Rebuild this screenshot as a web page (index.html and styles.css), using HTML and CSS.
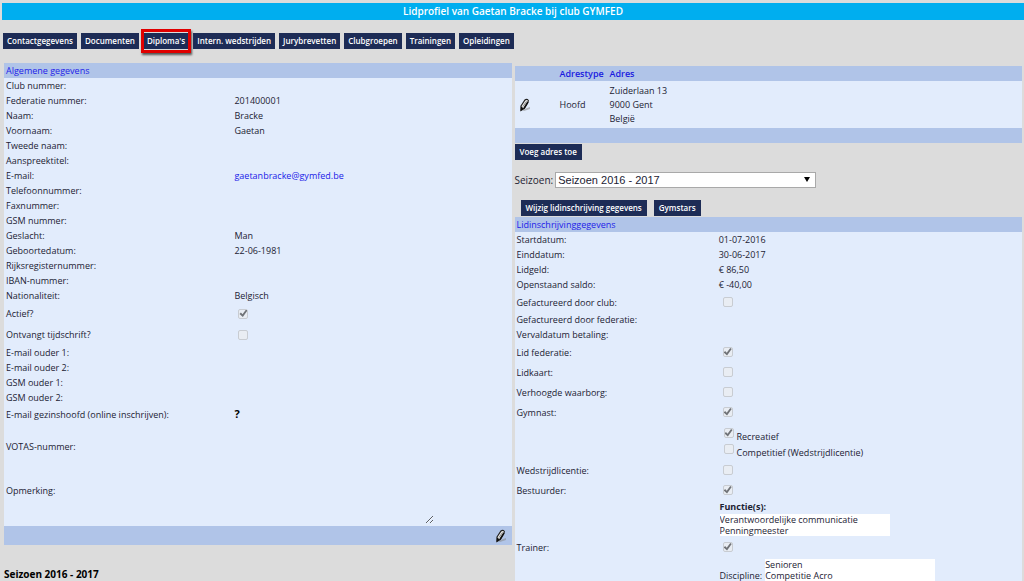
FILE: index.html
```html
<!DOCTYPE html>
<html lang="nl">
<head>
<meta charset="utf-8">
<title>Lidprofiel van Gaetan Bracke</title>
<link rel="stylesheet" href="styles.css">
</head>
<body>
<svg class="defs" width="0" height="0" aria-hidden="true">
  <symbol id="pencil" viewBox="0 0 12 14">
    <path d="M3 12 L11 9 L11 11 L5 13Z" fill="#888" opacity=".55"/>
    <path d="M2 8 L6 2 Q7 1 8.500 1.500 Q10 2.500 9 4 L5 10.500 L2 12.500Z" fill="#e8e8e8" stroke="#222" stroke-width="1.200"/>
    <path d="M2 8.500 L5 10.500 L1.500 13Z" fill="#111"/>
    <path d="M4 8.500 L7.500 3.500" stroke="#888" stroke-width="1"/>
    <path d="M5 10.500 L9 4" stroke="#111" stroke-width="1.500"/>
  </symbol>
</svg>
<h1 class="title">Lidprofiel van Gaetan Bracke bij club GYMFED</h1>
<nav class="tabs">
  <button class="btn">Contactgegevens</button>
  <button class="btn">Documenten</button>
  <button class="btn marked">Diploma's</button>
  <button class="btn">Intern. wedstrijden</button>
  <button class="btn">Jurybrevetten</button>
  <button class="btn">Clubgroepen</button>
  <button class="btn">Trainingen</button>
  <button class="btn">Opleidingen</button>
</nav>
<main class="columns">
  <section class="left">
    <div class="panel">
      <h2 class="bar">Algemene gegevens</h2>
      <div class="row"><span>Club nummer:</span></div>
      <div class="row"><span>Federatie nummer:</span><span>201400001</span></div>
      <div class="row"><span>Naam:</span><span>Bracke</span></div>
      <div class="row"><span>Voornaam:</span><span>Gaetan</span></div>
      <div class="row"><span>Tweede naam:</span></div>
      <div class="row"><span>Aanspreektitel:</span></div>
      <div class="row"><span>E-mail:</span><a href="mailto:gaetanbracke@gymfed.be">gaetanbracke@gymfed.be</a></div>
      <div class="row"><span>Telefoonnummer:</span></div>
      <div class="row"><span>Faxnummer:</span></div>
      <div class="row"><span>GSM nummer:</span></div>
      <div class="row"><span>Geslacht:</span><span>Man</span></div>
      <div class="row"><span>Geboortedatum:</span><span>22-06-1981</span></div>
      <div class="row"><span>Rijksregisternummer:</span></div>
      <div class="row"><span>IBAN-nummer:</span></div>
      <div class="row"><span>Nationaliteit:</span><span>Belgisch</span></div>
      <div class="row tall"><label for="actief">Actief?</label><input type="checkbox" id="actief" checked disabled></div>
      <div class="row tall"><label for="tijdschrift">Ontvangt tijdschrift?</label><input type="checkbox" id="tijdschrift" disabled></div>
      <div class="row"><span>E-mail ouder 1:</span></div>
      <div class="row"><span>E-mail ouder 2:</span></div>
      <div class="row"><span>GSM ouder 1:</span></div>
      <div class="row"><span>GSM ouder 2:</span></div>
      <div class="row household"><span>E-mail gezinshoofd (online inschrijven):</span><b class="help">?</b></div>
      <div class="row"><span>VOTAS-nummer:</span></div>
      <div class="row remark"><label for="opmerking">Opmerking:</label><textarea id="opmerking" readonly></textarea></div>
      <div class="foot"><button class="icon" aria-label="Bewerken"><svg><use href="#pencil"/></svg></button></div>
    </div>
    <h2 class="season-title">Seizoen 2016 - 2017</h2>
  </section>
  <section class="right">
    <table class="addresses">
      <thead><tr><th class="edit"></th><th class="type">Adrestype</th><th>Adres</th></tr></thead>
      <tbody><tr><td><button class="icon" aria-label="Adres bewerken"><svg><use href="#pencil"/></svg></button></td><td>Hoofd</td><td>Zuiderlaan 13<br>9000 Gent<br>België</td></tr></tbody>
      <tfoot><tr><td colspan="3"></td></tr></tfoot>
    </table>
    <button class="btn add">Voeg adres toe</button>
    <div class="season">
      <label for="seizoen">Seizoen:</label>
      <div class="picker"><select id="seizoen"><option>Seizoen 2016 - 2017</option></select></div>
    </div>
    <div class="actions">
      <button class="btn">Wijzig lidinschrijving gegevens</button>
      <button class="btn">Gymstars</button>
    </div>
    <div class="panel">
      <h2 class="bar">Lidinschrijvinggegevens</h2>
      <div class="row"><span>Startdatum:</span><span>01-07-2016</span></div>
      <div class="row"><span>Einddatum:</span><span>30-06-2017</span></div>
      <div class="row"><span>Lidgeld:</span><span>€ 86,50</span></div>
      <div class="row"><span>Openstaand saldo:</span><span>€ -40,00</span></div>
      <div class="row tall"><label for="club">Gefactureerd door club:</label><input type="checkbox" id="club" disabled></div>
      <div class="row"><span>Gefactureerd door federatie:</span></div>
      <div class="row"><span>Vervaldatum betaling:</span></div>
      <div class="row tall"><label for="lid">Lid federatie:</label><input type="checkbox" id="lid" checked disabled></div>
      <div class="row tall"><label for="kaart">Lidkaart:</label><input type="checkbox" id="kaart" disabled></div>
      <div class="row tall"><label for="waarborg">Verhoogde waarborg:</label><input type="checkbox" id="waarborg" disabled></div>
      <div class="row tall"><label for="gymnast">Gymnast:</label><input type="checkbox" id="gymnast" checked disabled></div>
      <div class="sub kinds">
        <div class="kind"><input type="checkbox" id="recreatief" checked disabled><label for="recreatief">Recreatief</label></div>
        <div class="kind"><input type="checkbox" id="competitief" disabled><label for="competitief">Competitief (Wedstrijdlicentie)</label></div>
      </div>
      <div class="row tall"><label for="licentie">Wedstrijdlicentie:</label><input type="checkbox" id="licentie" disabled></div>
      <div class="row tall"><label for="bestuurder">Bestuurder:</label><input type="checkbox" id="bestuurder" checked disabled></div>
      <div class="sub roles">
        <label for="functies"><b>Functie(s):</b></label>
        <select id="functies" class="list" multiple size="2"><option>Verantwoordelijke communicatie</option><option>Penningmeester</option></select>
      </div>
      <div class="row tall"><label for="trainer">Trainer:</label><input type="checkbox" id="trainer" checked disabled></div>
      <div class="sub discipline">
        <label for="discipline">Discipline:</label>
        <select id="discipline" class="list" multiple size="2"><option>Senioren</option><option>Competitie Acro</option></select>
      </div>
    </div>
  </section>
</main>
</body>
</html>
```
FILE: styles.css
```css
* { box-sizing: border-box; }
body {
  margin: 0;
  padding: 3px 0 0 2px;
  background: #dcdcdc;
  color: #1c2233;
  font: 9px/15px "Open Sans", "Trebuchet MS", sans-serif;
}
.defs { position: absolute; }
h1, h2 { margin: 0; font-size: inherit; }
button, select, textarea { font: inherit; color: inherit; }
a { color: #1a1ae8; text-decoration: none; }

.title {
  background: #00aeef;
  color: #fff;
  font-size: 10px;
  font-weight: 600;
  line-height: 17px;
  text-align: center;
}
.tabs { display: flex; gap: 4px; padding: 13px 0 0 1px; }
.btn {
  border: 0;
  padding: 0 5px;
  background: #1d2c56;
  color: #fff;
  font-size: 8px;
  font-weight: 600;
  line-height: 16px;
  white-space: nowrap;
}
.tabs .btn { padding: 0 4px; }
.marked { position: relative; }
.marked::after {
  content: "";
  position: absolute;
  inset: -4px -2px;
  border: 3px solid #e00000;
  box-shadow: 1px 2px 2px #555;
}

.columns {
  display: grid;
  grid-template-columns: 1fr 1fr;
  gap: 3px;
  padding: 14px 2px 0;
}
.panel { background: #e2ecfc; }
.bar {
  padding: 0 2px;
  background: #b0c4e8;
  color: #2222e8;
  font-weight: normal;
}
.row {
  display: grid;
  grid-template-columns: 45% 1fr;
  column-gap: 1px;
  align-items: center;
  min-height: 15px;
  padding-left: 2px;
}
.right .row { grid-template-columns: 40% 1fr; column-gap: 0; }
.tall { min-height: 20px; }
.left .tall { min-height: 21px; }
.household { padding-bottom: 16px; }
.help { color: #000; font-size: 11px; line-height: 18px; }
.remark { min-height: 72px; }
textarea {
  align-self: end;
  width: 200px;
  height: 66px;
  margin-bottom: 2px;
  border: 0;
  background: transparent;
  resize: both;
}
.foot {
  display: flex;
  justify-content: flex-end;
  align-items: center;
  height: 19px;
  padding-right: 5px;
  background: #b0c4e8;
}
.icon { display: block; padding: 0; border: 0; background: none; }
.icon svg { display: block; width: 12px; height: 14px; }
.season-title { padding-top: 22px; color: #000; font-size: 10px; }

input[type="checkbox"] {
  appearance: none;
  display: grid;
  place-items: center;
  width: 10px;
  height: 10px;
  margin: 0 0 0 4px;
  border: 1px solid #c8ccd2;
  border-radius: 2px;
  background: #e9edf3;
}
input:checked::before {
  content: "";
  width: 8px;
  height: 8px;
  background: #707378;
  clip-path: polygon(0 55%, 18% 38%, 38% 58%, 82% 0, 100% 14%, 42% 95%);
}

.right { padding-top: 3px; }
.addresses { width: 100%; border-collapse: collapse; background: #e2ecfc; }
.addresses th { padding: 0; background: #b0c4e8; color: #1a1ae0; font-weight: 600; text-align: left; }
.addresses td { padding: 3px 0 2px; line-height: 14px; }
.addresses td:first-child { padding-left: 4px; }
.addresses .edit { width: 45px; }
.addresses .type { width: 50px; }
.addresses tfoot td { height: 15px; padding: 0; background: #b0c4e8; }
.add { display: block; margin-top: 1px; }
.season { display: flex; align-items: center; gap: 2px; padding-top: 12px; font-size: 10px; }
.picker { position: relative; }
.picker::after {
  content: "";
  position: absolute;
  right: 6px;
  top: 5px;
  border: 3px solid transparent;
  border-top: 5px solid #000;
  border-bottom: 0;
}
.picker select {
  appearance: none;
  display: block;
  width: 261px;
  height: 16px;
  padding: 0 2px;
  border: 1px solid #a9a9a9;
  border-radius: 0;
  background: #fff;
  font: 11px/14px "Liberation Sans", Arial, sans-serif;
}
.actions { display: flex; gap: 7px; padding: 12px 6px 1px; }
.sub { margin-left: 40%; padding-left: 2px; }
.kinds { min-height: 38px; padding-top: 5px; }
.kind { display: flex; gap: 3px; height: 16px; }
.kind input { margin-top: 1px; }
.kind label { padding-top: 2px; }
.roles { display: flex; flex-direction: column; padding-bottom: 1px; }
.roles label { line-height: 14px; }
.list {
  width: 170px;
  height: 22px;
  padding: 0;
  border: 0;
  border-radius: 0;
  outline: 0;
  background: #fff;
  line-height: 11px;
  overflow: hidden;
}
.list option {
  display: flex;
  align-items: center;
  height: 11px;
  min-height: 0;
  padding: 0;
  line-height: 11px;
}
.discipline { display: flex; gap: 3px; align-items: flex-end; padding-top: 2px; }
.discipline label { line-height: 11px; }
```
